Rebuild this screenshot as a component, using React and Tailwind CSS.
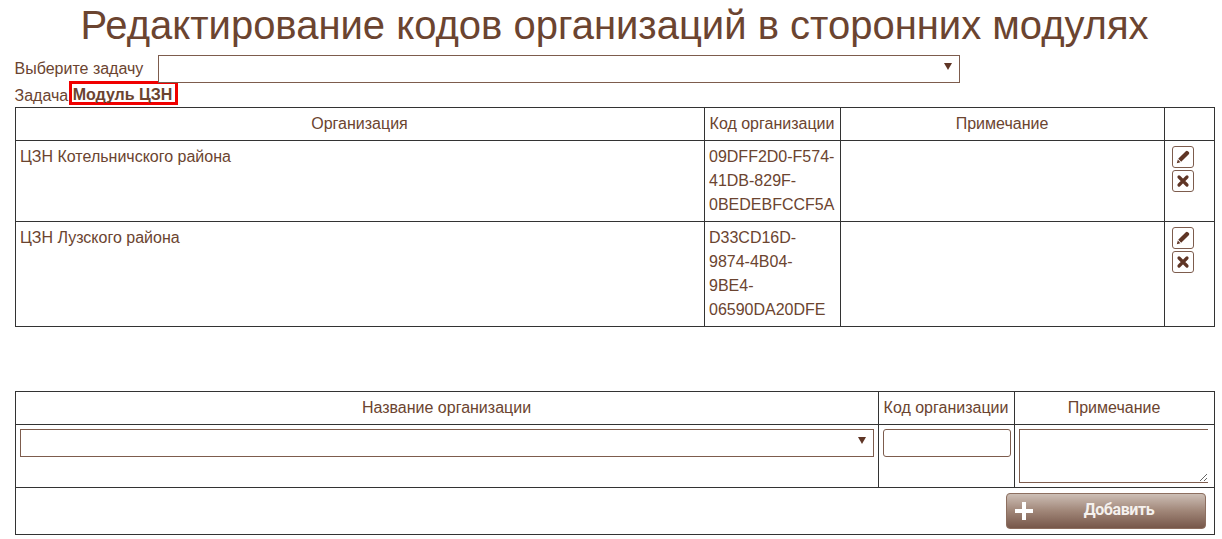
const TEXT = 'text-[#6b4430]';

const SelectBox = ({ className }) => (
    <div className={`relative border border-[#7d5c4d] bg-white ${className}`}>
        <span className="absolute right-[7px] top-[7px] w-0 h-0 border-x-[4px] border-x-transparent border-t-[7px] border-t-[#5f3525]" />
    </div>
);

const IconButton = ({ children }) => (
    <button className="w-[22px] h-[22px] flex items-center justify-center border border-[#7d5c4d] rounded-[3px] bg-white">
        {children}
    </button>
);

const PencilIcon = () => (
    <svg viewBox="0 0 14 14" className="w-[14px] h-[14px]">
        <path d="M9.8 1.2a1.5 1.5 0 0 1 2.1 0l.9.9a1.5 1.5 0 0 1 0 2.1L5.2 11.8 2.2 8.8Z M1.8 9.6 4.4 12.2 .8 13.2Z" fill="#5f3525" />
    </svg>
);

const CrossIcon = () => (
    <svg viewBox="0 0 14 14" className="w-[14px] h-[14px]">
        <path d="M3 3 11 11 M11 3 3 11" stroke="#5f3525" strokeWidth="3.2" strokeLinecap="round" />
    </svg>
);

const Actions = () => (
    <div className="flex flex-col gap-[2px] pl-[7px] pt-[5px]">
        <IconButton><PencilIcon /></IconButton>
        <IconButton><CrossIcon /></IconButton>
    </div>
);

const rows = [
    { name: 'ЦЗН Котельничского района', code: ['09DFF2D0-F574-', '41DB-829F-', '0BEDEBFCCF5A'] },
    { name: 'ЦЗН Лузского района', code: ['D33CD16D-', '9874-4B04-', '9BE4-', '06590DA20DFE'] },
];

export default function App() {
    return (
        <div className={`w-[1222px] h-[539px] overflow-hidden bg-white font-['Liberation_Sans',sans-serif] text-[16px] leading-[24px] ${TEXT}`}>
            <h1 className="text-[40px] leading-[46px] text-center pt-[2px] pl-[7px] h-[55px]">
                Редактирование кодов организаций в сторонних модулях
            </h1>

            <div className="flex items-center pl-[14.5px] h-[28px]">
                <span className="w-[143.5px]">Выберите задачу</span>
                <SelectBox className="w-[802px] h-[28px]" />
            </div>

            <div className="flex items-start pl-[14.5px] h-[24px]">
                <span className="mt-[-1px] pt-[2px]">Задача</span>
                <span className="border-[3px] border-[#f00000] font-bold pl-[1px] pt-[2px] w-[109px] ml-[0.5px] mt-[-2px] h-[24px] leading-[18px] whitespace-nowrap">Модуль ЦЗН</span>
            </div>

            <table className="ml-[15px] w-[1200px] table-fixed border-collapse border border-[#333]">
                <colgroup>
                    <col className="w-[689px]" />
                    <col className="w-[136px]" />
                    <col className="w-[324px]" />
                    <col />
                </colgroup>
                <thead>
                    <tr className="h-[33px]">
                        <th className="border border-[#333] font-normal pr-[1px]">Организация</th>
                        <th className="border border-[#333] font-normal pr-[1px]">Код организации</th>
                        <th className="border border-[#333] font-normal pr-[1px]">Примечание</th>
                        <th className="border border-[#333]" />
                    </tr>
                </thead>
                <tbody>
                    {rows.map((row) => (
                        <tr key={row.name}>
                            <td className="border border-[#333] align-top pl-[4px] pr-[5px] py-[4px]">{row.name}</td>
                            <td className="border border-[#333] align-top pl-[4px] pr-[5px] py-[4px] whitespace-nowrap">
                                {row.code.map((line) => <div key={line}>{line}</div>)}
                            </td>
                            <td className="border border-[#333]" />
                            <td className="border border-[#333] align-top"><Actions /></td>
                        </tr>
                    ))}
                </tbody>
            </table>

            <table className="ml-[15px] mt-[64px] w-[1200px] table-fixed border-collapse border border-[#333]">
                <colgroup>
                    <col className="w-[863px]" />
                    <col className="w-[136px]" />
                    <col />
                </colgroup>
                <thead>
                    <tr className="h-[33px]">
                        <th className="border border-[#333] font-normal pr-[1px]">Название организации</th>
                        <th className="border border-[#333] font-normal pr-[1px]">Код организации</th>
                        <th className="border border-[#333] font-normal pr-[1px]">Примечание</th>
                    </tr>
                </thead>
                <tbody>
                    <tr className="h-[63px]">
                        <td className="border border-[#333] align-top px-[4px] pt-[4px]">
                            <SelectBox className="w-[854px] h-[28px]" />
                        </td>
                        <td className="border border-[#333] align-top px-[4px] pt-[4px]">
                            <input className="block w-[128px] h-[28px] border border-[#7d5c4d] rounded-[3px] outline-none" />
                        </td>
                        <td className="border border-[#333] align-top pl-[4px] pt-[4px]">
                            <textarea className="block w-[189px] h-[54px] border border-r-0 border-[#7d5c4d] outline-none" />
                        </td>
                    </tr>
                    <tr className="h-[47px]">
                        <td colSpan={3} className="border border-[#333] pr-[8px]">
                            <div className="flex justify-end">
                                <button className="relative w-[200px] h-[36px] rounded-[4px] border border-[#8d6f60] bg-gradient-to-b from-[#cdbfb6] via-[#a08678] to-[#77574a] text-[#f5f1ee] font-['Roboto',sans-serif] font-bold text-[16px] tracking-[-0.4px]">
                                    <svg viewBox="0 0 20 20" className="absolute left-[7px] top-[7px] w-[20px] h-[20px]">
                                        <path d="M10 1V19 M1 10H19" stroke="#fff" strokeWidth="4" />
                                    </svg>
                                    <span className="block pl-[26px] pb-[2px]">Добавить</span>
                                </button>
                            </div>
                        </td>
                    </tr>
                </tbody>
            </table>
        </div>
    );
}
